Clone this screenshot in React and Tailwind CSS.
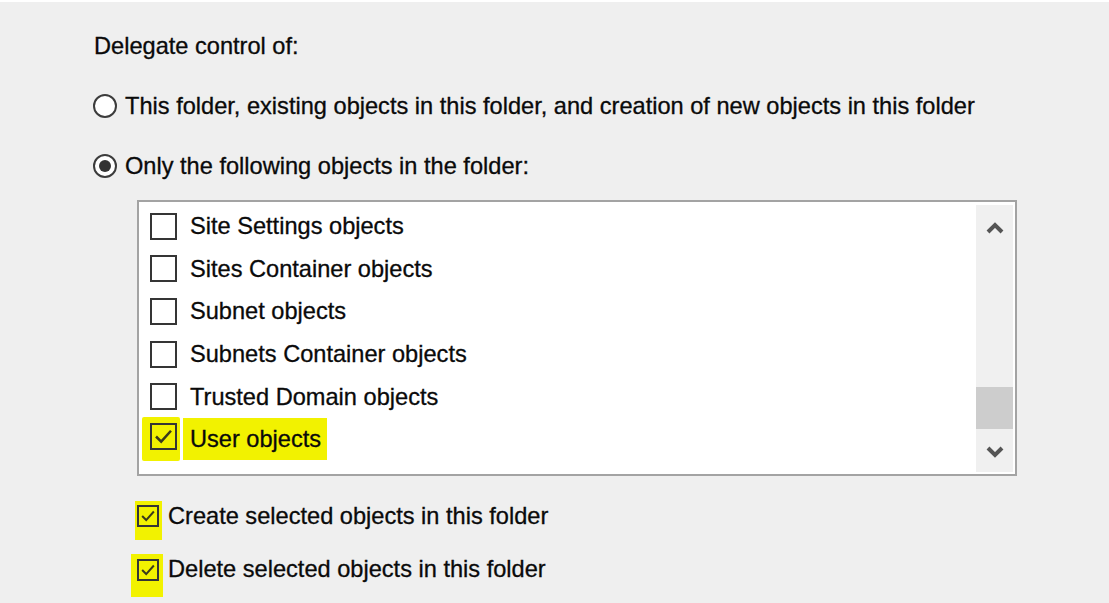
import React from "react";

const Y = "bg-[#f2f200]";

function Check({ size = 27, mark = true }) {
  return (
    <span
      className="flex items-center justify-center box-border border-2 border-[#353535]"
      style={{ width: size, height: size }}
    >
      {mark && (
        <svg viewBox="0 0 20 20" width={size - 4} height={size - 4}>
          <path d="M3.5 10 L8 14.5 L16.5 5" fill="none" stroke="#3a3a1c" strokeWidth="2.2" />
        </svg>
      )}
    </span>
  );
}

function Radio({ checked }) {
  return (
    <span className="w-[24px] h-[24px] rounded-full border-2 border-[#3c3c3c] bg-white flex items-center justify-center box-border shrink-0">
      {checked && <span className="w-[12px] h-[12px] rounded-full bg-[#333]" />}
    </span>
  );
}

function ListRow({ label, checked }) {
  if (checked) {
    return (
      <div className="h-[42.6px] flex items-center pl-[11px]">
        <span className={`${Y} -ml-[8px] pl-[8px] pr-[3px] pt-[6px] pb-[11px] -mt-[4px] -mb-[4px] rounded-[2px]`}>
          <Check size={27} mark />
        </span>
        <span className={`${Y} ml-[3px] h-[42px] flex items-center pl-[7px] pr-[6px]`}>{label}</span>
      </div>
    );
  }
  return (
    <div className="h-[42.6px] flex items-center pl-[11px]">
      <span className="bg-white">
        <Check size={27} mark={false} />
      </span>
      <span className="ml-[13px]">{label}</span>
    </div>
  );
}

export default function App() {
  const items = [
    "Site Settings objects",
    "Sites Container objects",
    "Subnet objects",
    "Subnets Container objects",
    "Trusted Domain objects",
  ];
  return (
    <div
      className="w-[1109px] h-[603px] bg-[#efefef] border-t-2 border-white box-border overflow-hidden text-[#0a0a0a] text-[23.6px] leading-[30px] pl-[93px] pt-[29px] [-webkit-text-stroke:0.3px_#0a0a0a]"
      style={{ fontFamily: '"Liberation Sans", Arial, sans-serif' }}
    >
      <div className="pl-[1px]">Delegate control of:</div>
      <div className="mt-[30px] h-[30px] flex items-center gap-[8px]">
        <Radio />
        <span>This folder, existing objects in this folder, and creation of new objects in this folder</span>
      </div>
      <div className="mt-[30px] h-[30px] flex items-center gap-[8px]">
        <Radio checked />
        <span>Only the following objects in the folder:</span>
      </div>

      <div className="mt-[19px] ml-[44px] w-[880px] h-[276px] border-2 border-[#a3a3a3] bg-white flex box-border">
        <div className="flex-1 pt-[3px]">
          {items.map((t) => (
            <ListRow key={t} label={t} />
          ))}
          <ListRow label="User objects" checked />
        </div>
        <div className="w-[37px] mt-[3px] mb-[2px] mr-[2px] bg-[#f0f0f0] flex flex-col">
          <div className="h-[46px] flex items-center justify-center">
            <svg width="18" height="12" viewBox="0 0 18 12">
              <path d="M2 10 L9 3 L16 10" fill="none" stroke="#555" strokeWidth="4" />
            </svg>
          </div>
          <div className="flex-1 flex flex-col justify-end">
            <div className="h-[42px] bg-[#cdcdcd]" />
          </div>
          <div className="h-[43px] flex items-center justify-center pt-[2px]">
            <svg width="18" height="12" viewBox="0 0 18 12">
              <path d="M2 2 L9 9 L16 2" fill="none" stroke="#555" strokeWidth="4" />
            </svg>
          </div>
        </div>
      </div>

      <div className="mt-[25px] ml-[44px] h-[30px] flex items-center">
        <span className={`${Y} -ml-[2px] pl-[2px] pr-[3px] pt-[4px] pb-[13px] mt-[9px]`}>
          <Check size={22} mark />
        </span>
        <span className="ml-[6px]">Create selected objects in this folder</span>
      </div>
      <div className="mt-[23px] ml-[44px] h-[30px] flex items-center">
        <span className={`${Y} -ml-[6px] pl-[6px] pr-[4px] pt-[5px] pb-[16px] mt-[12px]`}>
          <Check size={22} mark />
        </span>
        <span className="ml-[5px]">Delete selected objects in this folder</span>
      </div>
    </div>
  );
}
